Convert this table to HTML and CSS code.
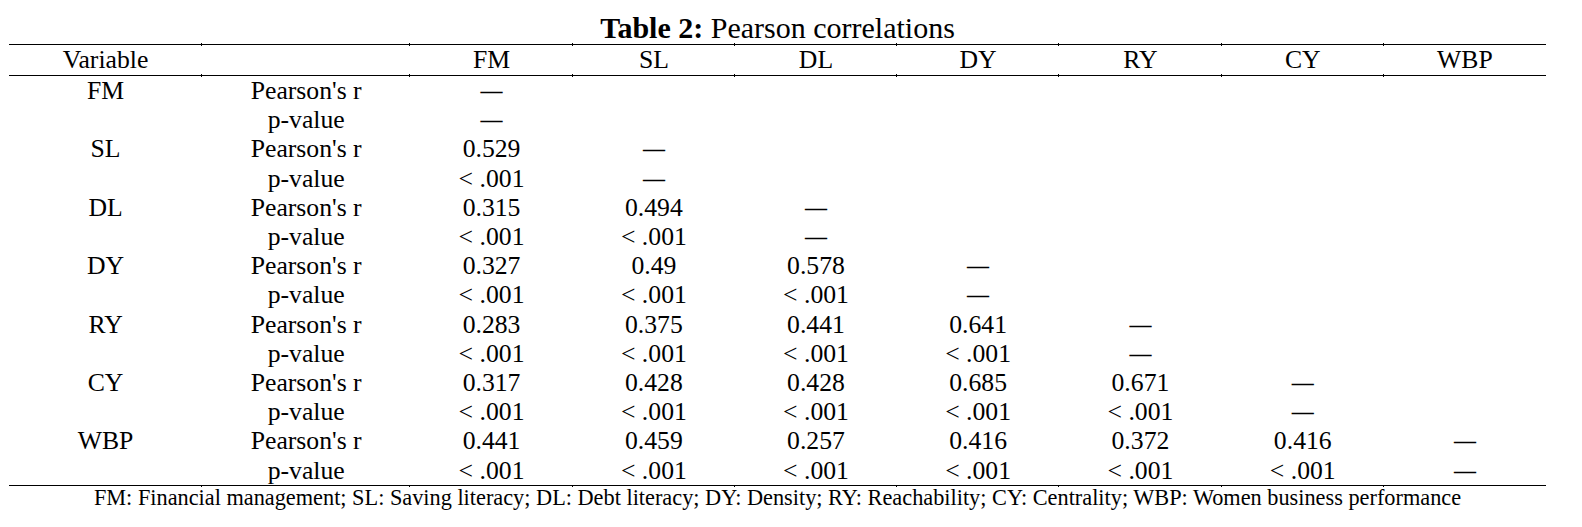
FILE: index.html
```html
<!DOCTYPE html>
<html lang="en">
<head>
<meta charset="utf-8">
<title>Table 2: Pearson correlations</title>
<link rel="stylesheet" href="styles.css">
</head>
<body>
<div class="wrap">
  <div class="title"><b>Table 2:</b> Pearson correlations</div>
  <table class="corr">
    <colgroup>
      <col class="c-var"><col class="c-stat"><col class="c-a"><col class="c-b"><col class="c-b"><col class="c-b"><col class="c-a"><col class="c-b"><col class="c-b">
    </colgroup>
    <thead>
      <tr>
        <th>Variable</th><th class="tk"></th><th class="tk">FM</th><th class="tk">SL</th><th class="tk">DL</th><th class="tk">DY</th><th class="tk">RY</th><th class="tk">CY</th><th class="tk">WBP</th>
      </tr>
    </thead>
    <tbody>
      <tr><td>FM</td><td>Pearson's r</td><td><span class="d">—</span></td><td></td><td></td><td></td><td></td><td></td><td></td></tr>
      <tr><td></td><td>p-value</td><td><span class="d">—</span></td><td></td><td></td><td></td><td></td><td></td><td></td></tr>
      <tr><td>SL</td><td>Pearson's r</td><td>0.529</td><td><span class="d">—</span></td><td></td><td></td><td></td><td></td><td></td></tr>
      <tr><td></td><td>p-value</td><td>&lt; .001</td><td><span class="d">—</span></td><td></td><td></td><td></td><td></td><td></td></tr>
      <tr><td>DL</td><td>Pearson's r</td><td>0.315</td><td>0.494</td><td><span class="d">—</span></td><td></td><td></td><td></td><td></td></tr>
      <tr><td></td><td>p-value</td><td>&lt; .001</td><td>&lt; .001</td><td><span class="d">—</span></td><td></td><td></td><td></td><td></td></tr>
      <tr><td>DY</td><td>Pearson's r</td><td>0.327</td><td>0.49</td><td>0.578</td><td><span class="d">—</span></td><td></td><td></td><td></td></tr>
      <tr><td></td><td>p-value</td><td>&lt; .001</td><td>&lt; .001</td><td>&lt; .001</td><td><span class="d">—</span></td><td></td><td></td><td></td></tr>
      <tr><td>RY</td><td>Pearson's r</td><td>0.283</td><td>0.375</td><td>0.441</td><td>0.641</td><td><span class="d">—</span></td><td></td><td></td></tr>
      <tr><td></td><td>p-value</td><td>&lt; .001</td><td>&lt; .001</td><td>&lt; .001</td><td>&lt; .001</td><td><span class="d">—</span></td><td></td><td></td></tr>
      <tr><td>CY</td><td>Pearson's r</td><td>0.317</td><td>0.428</td><td>0.428</td><td>0.685</td><td>0.671</td><td><span class="d">—</span></td><td></td></tr>
      <tr><td></td><td>p-value</td><td>&lt; .001</td><td>&lt; .001</td><td>&lt; .001</td><td>&lt; .001</td><td>&lt; .001</td><td><span class="d">—</span></td><td></td></tr>
      <tr><td>WBP</td><td>Pearson's r</td><td>0.441</td><td>0.459</td><td>0.257</td><td>0.416</td><td>0.372</td><td>0.416</td><td><span class="d">—</span></td></tr>
      <tr class="last"><td></td><td class="tk">p-value</td><td class="tk">&lt; .001</td><td class="tk">&lt; .001</td><td class="tk">&lt; .001</td><td class="tk">&lt; .001</td><td class="tk">&lt; .001</td><td class="tk">&lt; .001</td><td class="tk"><span class="d">—</span></td></tr>
    </tbody>
  </table>
  <p class="note">FM: Financial management; SL: Saving literacy; DL: Debt literacy; DY: Density; RY: Reachability; CY: Centrality; WBP: Women business performance</p>
</div>
</body>
</html>
```

FILE: styles.css
```css
html, body {
  margin: 0;
  padding: 0;
  background: #fff;
  color: #000;
  font-family: "Liberation Serif", "Times New Roman", serif;
}

.wrap {
  margin-left: 9px;
  width: 1537px;
}

.title {
  padding-top: 12px;
  height: 32px;
  line-height: 32px;
  font-size: 30px;
  text-align: center;
  white-space: nowrap;
}

.title b {
  font-weight: bold;
}

.corr {
  width: 1537px;
  table-layout: fixed;
  border-collapse: collapse;
  border-spacing: 0;
  font-size: 25.7px;
}

.c-var { width: 193px; }
.c-stat { width: 208px; }
.c-a { width: 162.5px; }
.c-b { width: 162px; }

.corr th,
.corr td {
  padding: 0;
  text-align: center;
  white-space: nowrap;
  font-weight: normal;
  position: relative;
}

.corr thead th {
  border-top: 1px solid #000;
  border-bottom: 1px solid #000;
  height: 30px;
  line-height: 30px;
}

.corr tbody td {
  height: 29.2px;
  line-height: 29.2px;
}

.corr tbody tr.last td {
  border-bottom: 1px solid #000;
}

/* em dash on the diagonal: shorter and heavier than the text dash */
.d {
  font-size: 22px;
  font-weight: bold;
  line-height: 0;
  position: relative;
  top: -1px;
}

/* small cell-border ticks on the rules */
.corr thead th.tk::before,
.corr thead th.tk::after {
  content: "";
  position: absolute;
  left: -1px;
  width: 1px;
  height: 3px;
  background: #000;
}

.corr thead th.tk::before { top: -2px; }
.corr thead th.tk::after { bottom: -2px; }

.corr tbody tr.last td.tk::after {
  content: "";
  position: absolute;
  left: -1px;
  bottom: -2px;
  width: 1px;
  height: 2px;
  background: #000;
}

.note {
  margin: 0;
  font-size: 22.3px;
  line-height: 24px;
  text-align: center;
  white-space: nowrap;
}
```
